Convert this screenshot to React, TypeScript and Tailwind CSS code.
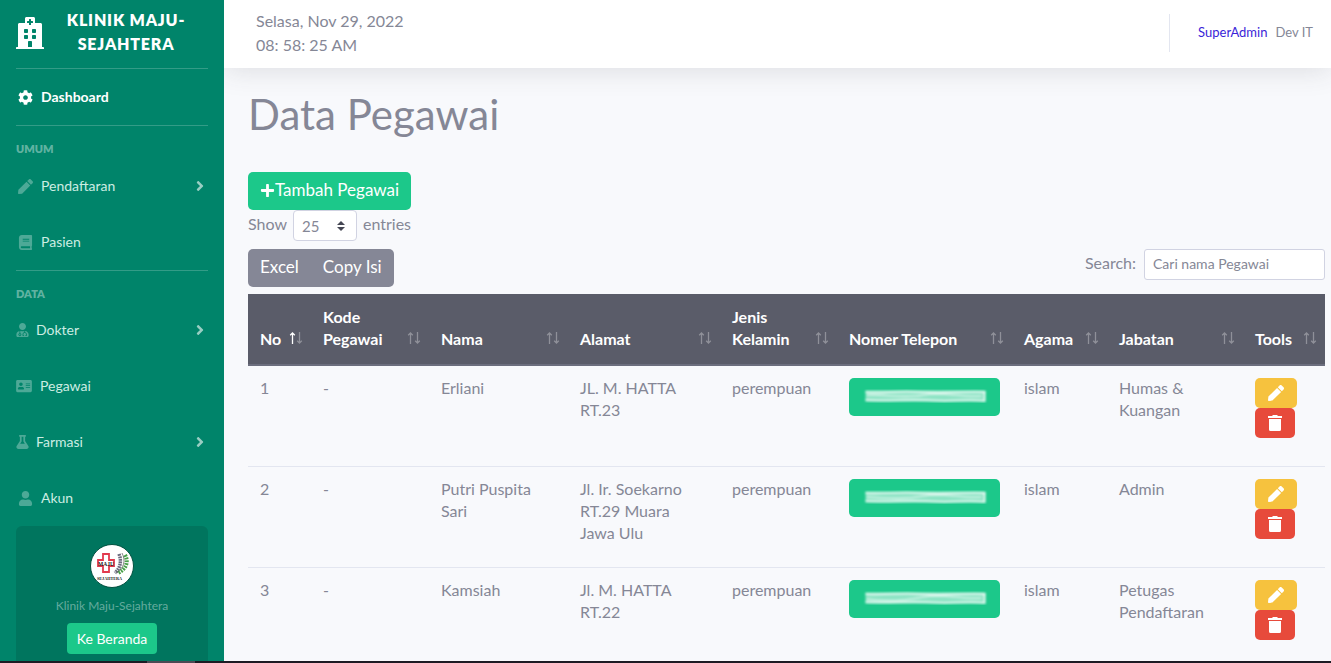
import React from "react";
import {
  FaHospital, FaCog, FaPen, FaBook, FaUserMd, FaAddressCard, FaFlask, FaUser, FaAngleRight, FaPlus,
} from "react-icons/fa";

type Item = { label: string; icon: React.ReactNode; arrow?: boolean };

function Divider() {
  return <hr className="mx-4 border-t border-white/20" />;
}

function NavItem({ label, icon, arrow }: Item) {
  return (
    <li>
      <a href="#" className="flex h-14 items-center px-4 text-sm text-[#ccede3]">
        {icon}
        <span>{label}</span>
        {arrow && <FaAngleRight className="ml-auto size-4 text-white/60" />}
      </a>
    </li>
  );
}

function Emblem() {
  return (
    <svg viewBox="0 0 44 44" className="size-11" aria-hidden="true">
      <circle cx="22" cy="22" r="21.5" fill="#fff" stroke="#00503f" strokeWidth="1" />
      <path d="M13 10h6v6h5v6h-5v6h-6v-6H8v-6h5z" fill="#fff" stroke="#e23a4e" strokeWidth="1.8" />
      <text x="16" y="21.5" textAnchor="middle" fontSize="5.5" fontWeight="700" fontFamily="Liberation Serif, serif" fill="#222">MAJU</text>
      <text x="19.5" y="36" textAnchor="middle" fontSize="4.2" fontWeight="700" fontFamily="Liberation Serif, serif" fill="#222">SEJAHTERA</text>
      <path d="M29 10c3 8 1 14-4 19" fill="none" stroke="#6b6a7d" strokeWidth="3.5" strokeDasharray="1.8 .7" />
      <path d="M35 11c4 7 1 14-7 18" fill="none" stroke="#48a048" strokeWidth="4" strokeDasharray="1.8 1" />
      <path d="M32 9c4 8 2 15-6 20" fill="none" stroke="#555" strokeWidth=".7" />
    </svg>
  );
}

function SortArrows({ active = false }: { active?: boolean }) {
  return (
    <svg viewBox="0 0 14 12" className="h-3 w-3.5 shrink-0" fill="none" stroke="#fff" aria-hidden="true">
      <path d="M3.5 12V1M1.2 3.2L3.5 1l2.3 2.2" strokeWidth="1.3" opacity={active ? 1 : 0.32} />
      <path d="M10.500 0v11M8.200 8.800l2.300 2.200 2.300-2.200" strokeWidth="1.300" opacity="0.32" />
    </svg>
  );
}

function TrashIcon() {
  return (
    <svg viewBox="0 0 14 16" className="h-4 w-3.5" fill="#fff" aria-hidden="true">
      <path d="M0 1h4l1-1h4l1 1h4v2H0zM1 4h12v10.500q0 1.500-1.500 1.500h-9Q1 16 1 14.500z" />
    </svg>
  );
}

function HiddenNumber({ seed }: { seed: number }) {
  const shift = seed * 3;
  return (
    <svg viewBox="0 0 126 14" className="h-3.5 w-full" fill="none" stroke="#fff" aria-hidden="true">
      <g style={{ filter: "blur(0.8px)" }}>
        <path d="M4 7H124" strokeWidth="11" opacity="0.5" />
        <path d={`M4 3C${22 + shift} 4 38 1.500 60 3S104 2 124 3`} strokeWidth="2" opacity="0.75" />
        <path d={`M5 ${6 + seed}C24 ${5 + shift} 42 10 62 6S100 9 120 7`} strokeWidth="1.600" opacity="0.6" />
        <path d="M4 11C26 12.500 48 10 70 11.500S106 10 123 12V3" strokeWidth="2" opacity="0.75" />
      </g>
    </svg>
  );
}

const columns: { label: string; width: string }[] = [
  { label: "No", width: "w-[63px]" },
  { label: "Kode Pegawai", width: "w-[118px]" },
  { label: "Nama", width: "w-[139px]" },
  { label: "Alamat", width: "w-[152px]" },
  { label: "Jenis Kelamin", width: "w-[117px]" },
  { label: "Nomer Telepon", width: "w-[175px]" },
  { label: "Agama", width: "w-[95px]" },
  { label: "Jabatan", width: "w-[136px]" },
  { label: "Tools", width: "w-[82px]" },
];

const rows = [
  { nama: "Erliani", alamat: "JL. M. HATTA RT.23", jabatan: "Humas & Kuangan" },
  { nama: "Putri Puspita Sari", alamat: "Jl. Ir. Soekarno RT.29 Muara Jawa Ulu", jabatan: "Admin" },
  { nama: "Kamsiah", alamat: "Jl. M. HATTA RT.22", jabatan: "Petugas Pendaftaran" },
];

function Sidebar() {
  const wide = "mr-2 ml-0.5 size-[15px] text-white/30";
  const narrow = "mr-[7px] h-3.5 w-[13px] text-white/30";
  return (
    <nav className="w-56 shrink-0 overflow-hidden bg-[#00846a]">
      <a href="#" className="flex h-[68px] items-center px-4 pb-1 text-white">
        <FaHospital className="mt-0.5 h-8 w-7 shrink-0" />
        <span className="flex-1 text-center text-base leading-6 font-extrabold tracking-wider">KLINIK MAJU-SEJAHTERA</span>
      </a>
      <Divider />
      <ul>
        <li>
          <a href="#" className="flex h-14 items-center px-4 text-sm font-bold text-white">
            <FaCog className="mr-2 ml-0.5 size-[15px]" />
            <span>Dashboard</span>
          </a>
        </li>
      </ul>
      <Divider />
      <h2 className="px-4 pt-[15px] pb-px text-[11px] leading-4 font-extrabold text-white/40">UMUM</h2>
      <ul>
        <NavItem label="Pendaftaran" icon={<FaPen className={wide} />} arrow />
        <NavItem label="Pasien" icon={<FaBook className={wide} />} />
      </ul>
      <Divider />
      <h2 className="px-4 pt-[15px] text-[11px] leading-4 font-extrabold text-white/40">DATA</h2>
      <ul>
        <NavItem label="Dokter" icon={<FaUserMd className={narrow} />} arrow />
        <NavItem label="Pegawai" icon={<FaAddressCard className="mr-2 h-3.5 w-4 text-white/30" />} />
        <NavItem label="Farmasi" icon={<FaFlask className={narrow} />} arrow />
        <NavItem label="Akun" icon={<FaUser className={wide} />} />
      </ul>
      <div className="mx-4 flex flex-col items-center rounded-md bg-[#00755e] px-4 pt-[18px] pb-4 text-xs">
        <Emblem />
        <p className="mt-2 leading-5 text-white/40">Klinik Maju-Sejahtera</p>
        <a href="#" className="mt-[7px] rounded bg-[#1cc88a] px-2.5 py-1.5 text-sm leading-[19px] text-white">Ke Beranda</a>
      </div>
    </nav>
  );
}

export default function App() {
  return (
    <div className="flex h-screen flex-col overflow-hidden bg-[#f8f9fc] font-[Lato,sans-serif] text-base text-[#858796]">
      <div className="flex min-h-0 flex-1">
        <Sidebar />
        <div className="min-w-0 flex-1 overflow-hidden">
          <header className="flex h-[68px] items-center bg-white pr-[18px] pb-[3px] pl-8 shadow-[0_2px_28px_rgba(58,59,69,0.15)]">
            <p className="leading-6">
              Selasa, Nov 29, 2022
              <br />
              08: 58: 25 AM
            </p>
            <div className="ml-auto flex h-[38px] items-center gap-2 border-l border-[#e3e6f0] pl-7 text-[13px]">
              <a href="#" className="text-[#3a1fd8]">SuperAdmin</a>
              <span>Dev IT</span>
            </div>
          </header>
          <main className="pt-[22px] pr-1.5 pl-6">
            <h1 className="text-[42px] leading-12">Data Pegawai</h1>
            <button className="mt-[34px] flex h-[38px] items-center rounded-[5px] bg-[#1cc88a] px-3 pb-0.5 text-[17px] text-white">
              <FaPlus className="size-[15px]" />
              Tambah Pegawai
            </button>
            <label className="flex items-start gap-1.5 leading-7">
              Show
              <span className="relative">
                <select className="block h-[31px] w-16 appearance-none rounded border border-[#d1d3e2] bg-white px-2 text-[15px]" defaultValue="25">
                  <option>25</option>
                </select>
                <svg viewBox="0 0 8 10" className="pointer-events-none absolute top-[11px] right-3 h-2.5 w-2" fill="#444653" aria-hidden="true">
                  <path d="M4 0l4 4H0zM4 10L0 6h8z" />
                </svg>
              </span>
              entries
            </label>
            <div className="mt-2 mb-[7px] flex items-start justify-between">
              <div className="flex h-[38px] overflow-hidden rounded-[5px] bg-[#858796] text-[17px] text-white">
                <button className="px-3 pb-0.5">Excel</button>
                <button className="px-3 pb-0.5">Copy Isi</button>
              </div>
              <label className="flex items-start gap-2 leading-7">
                Search:
                <input className="h-[31px] w-[181px] rounded-[3px] border border-[#d1d3e2] bg-white px-2 pb-0.5 text-sm placeholder:text-[#858796]" placeholder="Cari nama Pegawai" />
              </label>
            </div>
            <table className="w-full table-fixed border-collapse text-left leading-[22px]">
              <thead className="bg-[#5a5c69] text-white">
                <tr className="h-[71px]">
                  {columns.map((c, i) => (
                    <th key={c.label} className={`${c.width} border-b-2 border-[#6c6e7e] pt-2.5 pr-2 pb-3.5 pl-3 align-bottom font-bold`}>
                      <div className="flex items-end justify-between">
                        <span>{c.label}</span>
                        <span className="pb-1.5"><SortArrows active={i === 0} /></span>
                      </div>
                    </th>
                  ))}
                </tr>
              </thead>
              <tbody>
                {rows.map((r, i) => (
                  <tr key={r.nama} className="h-[101px] border-b border-[#e3e6f0] align-top">
                    <td className="px-3 py-[11px]">{i + 1}</td>
                    <td className="px-3 py-[11px]">-</td>
                    <td className="px-3 py-[11px]">{r.nama}</td>
                    <td className="px-3 py-[11px]">{r.alamat}</td>
                    <td className="px-3 py-[11px]">perempuan</td>
                    <td className="p-3">
                      <button aria-label="Nomer Telepon" className="flex h-[38px] w-full items-center rounded-[5px] bg-[#1cc88a] px-3 pb-0.5">
                        <HiddenNumber seed={i} />
                      </button>
                    </td>
                    <td className="px-3 py-[11px]">islam</td>
                    <td className="px-3 py-[11px]">{r.jabatan}</td>
                    <td className="p-3">
                      <button aria-label="Edit" className="flex h-[30px] w-[42px] items-center justify-center rounded-[5px] bg-[#f6c23e] text-white">
                        <FaPen className="size-4" />
                      </button>
                      <button aria-label="Hapus" className="flex h-[30px] w-10 items-center justify-center rounded-[5px] bg-[#e74a3b]">
                        <TrashIcon />
                      </button>
                    </td>
                  </tr>
                ))}
              </tbody>
            </table>
          </main>
        </div>
      </div>
      <div className="h-0.5 shrink-0 bg-[#1d1b24] pl-[147px]">
        <div className="h-full w-12 bg-[#4c4a54]" />
      </div>
    </div>
  );
}
